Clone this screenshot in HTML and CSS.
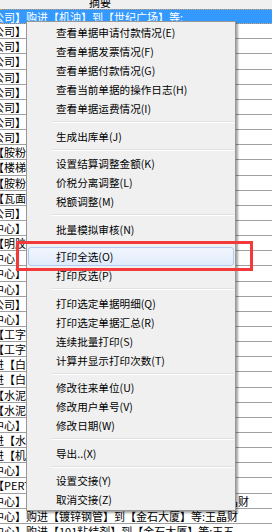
FILE: index.html
```html
<!DOCTYPE html>
<html lang="zh-CN">
<head>
    <meta charset="UTF-8">
    <title>单据列表</title>
    <link rel="stylesheet" href="styles.css">
</head>
<body>

    <!-- 单据列表（摘要列，已横向滚动） -->
    <div class="grid">
        <div class="head">摘要</div>
        <div class="row sel">公司】购进【机油】到【世纪广场】等:</div>
        <div class="row">公司】购进【机油】到【世纪广场】等:</div>
        <div class="row">公司】购进【柴油】到【世纪广场】等:</div>
        <div class="row">公司】购进【机油】到【金石大厦】等:</div>
        <div class="row">公司】购进【机油】到【世纪广场】等:</div>
        <div class="row">公司】购进【钢管】到【金石大厦】等:</div>
        <div class="row">公司】购进【机油】到【世纪广场】等:</div>
        <div class="row">公司】购进【柴油】到【世纪广场】等:</div>
        <div class="row">公司】购进【机油】到【世纪广场】等:</div>
        <div class="row">【胺粉】到【世纪广场】等:</div>
        <div class="row">【楼梯扶手】到【世纪广场】等:</div>
        <div class="row">【胺粉】到【金石大厦】等:</div>
        <div class="row">【瓦面】到【世纪广场】等:</div>
        <div class="row">公司】购进【机油】到【世纪广场】等:</div>
        <div class="row">中心】购进【钢管】到【金石大厦】等:</div>
        <div class="row">【明胶】到【金石大厦】等:</div>
        <div class="row">中心】购进【钢管】到【金石大厦】等:</div>
        <div class="row">中心】购进【水泥】到【金石大厦】等:</div>
        <div class="row">中心】购进【钢管】到【金石大厦】等:</div>
        <div class="row">公司】购进【机油】到【世纪广场】等:</div>
        <div class="row">中心】购进【水泥】到【金石大厦】等:</div>
        <div class="row">【工字钢】到【金石大厦】等:</div>
        <div class="row">【工字钢】到【金石大厦】等:</div>
        <div class="row">进【白水泥】到【金石大厦】等:</div>
        <div class="row">进【白水泥】到【金石大厦】等:</div>
        <div class="row">【水泥】到【金石大厦】等:</div>
        <div class="row">【水泥】到【金石大厦】等:</div>
        <div class="row">中心】购进【钢管】到【金石大厦】等:</div>
        <div class="row">进【水泥】到【金石大厦】等:</div>
        <div class="row">进【机油】到【金石大厦】等:</div>
        <div class="row">中心】购进【钢管】到【金石大厦】等:</div>
        <div class="row">【PERT管】到【金石大厦】等:</div>
        <div class="row">中心】购进【镀锌钢管件】到【金石大厦】等:王晶财</div>
        <div class="row">中心】购进【镀锌钢管】到【金石大厦】等:王晶财</div>
        <div class="row">中心】购进【101粘结剂】到【金石大厦】等:王五</div>
    </div>

    <!-- 右键菜单 -->
    <div class="menu">
        <div class="item">查看单据申请付款情况(E)</div>
        <div class="item">查看单据发票情况(F)</div>
        <div class="item">查看单据付款情况(G)</div>
        <div class="item">查看当前单据的操作日志(H)</div>
        <div class="item">查看单据运费情况(I)</div>
        <div class="sep"></div>
        <div class="item">生成出库单(J)</div>
        <div class="sep"></div>
        <div class="item">设置结算调整金额(K)</div>
        <div class="item">价税分离调整(L)</div>
        <div class="item">税额调整(M)</div>
        <div class="sep"></div>
        <div class="item">批量模拟审核(N)</div>
        <div class="sep"></div>
        <div class="item hover">打印全选(O)</div>
        <div class="item">打印反选(P)</div>
        <div class="sep"></div>
        <div class="item">打印选定单据明细(Q)</div>
        <div class="item">打印选定单据汇总(R)</div>
        <div class="item">连续批量打印(S)</div>
        <div class="item">计算并显示打印次数(T)</div>
        <div class="sep"></div>
        <div class="item">修改往来单位(U)</div>
        <div class="item">修改用户单号(V)</div>
        <div class="item">修改日期(W)</div>
        <div class="sep"></div>
        <div class="item">导出..(X)</div>
        <div class="sep"></div>
        <div class="item">设置交接(Y)</div>
        <div class="item">取消交接(Z)</div>
    </div>

    <!-- 红色标注框 -->
    <div class="mark"></div>

</body>
</html>
```

FILE: styles.css
```css
body {
    margin: 0;
    font-family: "Noto Sans CJK SC", sans-serif;
    background: #fff;
    overflow: hidden;
}
.grid {
    width: 272px;
    height: 532px;
    overflow: hidden;
}
.head {
    height: 9px;
    background: #f0f0f0;
    font-size: 11px;
    line-height: 4px;
    padding-left: 89px;
    overflow: hidden;
}
.row {
    height: 14.15px;
    border-bottom: 1px solid #a0a0a0;
    font-size: 11px;
    line-height: 14px;
    white-space: nowrap;
    text-indent: -7px;
    color: #000;
    overflow: hidden;
}
.row.sel {
    background: #3399ff;
    color: #fff;
    border-top: 1px dotted #d9a066;
    border-bottom: 1px dotted #d9a066;
    height: 13.15px;
}
.menu {
    position: absolute;
    left: 26px;
    top: 21px;
    width: 210px;
    box-sizing: border-box;
    border: 1px solid #979797;
    padding: 1px;
    background: #f0f0f0;
    box-shadow: 2px 2px 2px rgba(0, 0, 0, 0.35);
    font-size: 10.6px;
    color: #000;
}
.item {
    height: 19px;
    line-height: 19px;
    padding-left: 28px;
    white-space: nowrap;
    box-sizing: border-box;
}
.item.hover {
    border: 1px solid #aeccf2;
    border-radius: 3px;
    background: linear-gradient(#f1f6fd, #e0ebfb);
    line-height: 17px;
    padding-left: 27px;
}
.sep {
    height: 0;
    margin: 3.25px 0 3.25px 24px;
    border-top: 1px solid #e0e0e0;
    border-bottom: 1px solid #fff;
}
.mark {
    position: absolute;
    left: 16px;
    top: 241px;
    width: 237px;
    height: 30px;
    box-sizing: border-box;
    border: 3px solid #f23a3a;
}
```
